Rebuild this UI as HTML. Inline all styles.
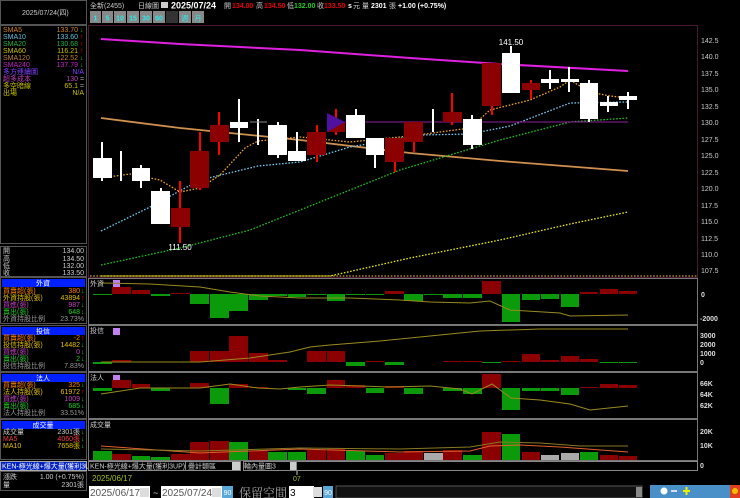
<!DOCTYPE html>
<html><head><meta charset="utf-8"><style>
html,body{margin:0;padding:0;background:#000;width:740px;height:498px;overflow:hidden}
svg{display:block}
text{font-family:"Liberation Sans","Noto Sans CJK TC",sans-serif;font-size:7px}
.d{stroke-dasharray:1.6 1.6;fill:none;stroke-width:1.3}
.w{fill:#fff}.rb{fill:#8b0000}.rw{stroke:#f00;stroke-width:2}.ww{stroke:#fff;stroke-width:2}
.g{fill:#0a9a0a}.r{fill:#8b0000}.gy{fill:#aaa}
</style></head><body>
<svg width="740" height="498" viewBox="0 0 740 498" xmlns="http://www.w3.org/2000/svg">
<rect width="740" height="498" fill="#000"/>
<g fill="none" stroke="#555" stroke-width="1">
<rect x="0.5" y="0.5" width="86" height="24"/>
<rect x="0.5" y="25.5" width="86" height="218"/>
<rect x="0.5" y="246.5" width="86" height="30"/>
<rect x="0.5" y="277.5" width="86" height="46"/>
<rect x="0.5" y="325.5" width="86" height="46"/>
<rect x="0.5" y="372.5" width="86" height="46"/>
<rect x="0.5" y="419.5" width="86" height="40"/>
<rect x="0.5" y="471.5" width="86" height="19"/>
</g>
<text x="22" y="15" fill="#ccc">2025/07/24(四)</text>
<g>
<text x="3" y="32" fill="#d08020">SMA5</text><text x="78" y="32" fill="#d08020" text-anchor="end">133.70</text><text x="80" y="32" fill="#0c0">↓</text>
<text x="3" y="39" fill="#60c0e0">SMA10</text><text x="78" y="39" fill="#60c0e0" text-anchor="end">133.60</text><text x="80" y="39" fill="#f00">↑</text>
<text x="3" y="46" fill="#20b040">SMA20</text><text x="78" y="46" fill="#20b040" text-anchor="end">130.68</text><text x="80" y="46" fill="#f00">↑</text>
<text x="3" y="53" fill="#c8c000">SMA60</text><text x="78" y="53" fill="#c8c000" text-anchor="end">116.21</text><text x="80" y="53" fill="#f00">↑</text>
<text x="3" y="60" fill="#c08040">SMA120</text><text x="78" y="60" fill="#c08040" text-anchor="end">122.52</text><text x="80" y="60" fill="#0c0">↓</text>
<text x="3" y="67" fill="#c020c0">SMA240</text><text x="78" y="67" fill="#c020c0" text-anchor="end">137.79</text><text x="80" y="67" fill="#0c0">↓</text>
<text x="3" y="74" fill="#8040ff">多方連續圖</text><text x="84" y="74" fill="#8040ff" text-anchor="end">N/A</text>
<text x="3" y="81" fill="#c040c0">超多成本</text><text x="78" y="81" fill="#c040c0" text-anchor="end">130</text><text x="80" y="81" fill="#aaa">=</text>
<text x="3" y="88" fill="#c8c000">多空暗線</text><text x="78" y="88" fill="#c8c000" text-anchor="end">65.1</text><text x="80" y="88" fill="#aaa">=</text>
<text x="3" y="95" fill="#c8c000">出場</text><text x="84" y="95" fill="#c8c000" text-anchor="end">N/A</text>
</g>
<g fill="#ccc">
<text x="3" y="253">開</text><text x="84" y="253" text-anchor="end">134.00</text>
<text x="3" y="261">高</text><text x="84" y="261" text-anchor="end">134.50</text>
<text x="3" y="268">低</text><text x="84" y="268" text-anchor="end">132.00</text>
<text x="3" y="275">收</text><text x="84" y="275" text-anchor="end">133.50</text>
</g>
<rect x="2" y="279" width="83" height="8" fill="#0020ff"/><text x="43" y="285.5" fill="#fff" text-anchor="middle">外資</text>
<rect x="2" y="327" width="83" height="8" fill="#0020ff"/><text x="43" y="333.5" fill="#fff" text-anchor="middle">投信</text>
<rect x="2" y="374" width="83" height="8" fill="#0020ff"/><text x="43" y="380.5" fill="#fff" text-anchor="middle">法人</text>
<rect x="2" y="421" width="83" height="8" fill="#0020ff"/><text x="43" y="427.5" fill="#fff" text-anchor="middle">成交量</text>
<g>
<text x="3" y="293" fill="#ff8000">買賣超(張)</text><text x="80" y="293" fill="#ff8000" text-anchor="end">380</text><text x="81" y="293" fill="#0c0">↓</text>
<text x="3" y="300" fill="#e0c000">外資持股(張)</text><text x="80" y="300" fill="#e0c000" text-anchor="end">43894</text><text x="81" y="300" fill="#f00">↑</text>
<text x="3" y="307" fill="#c040c0">買進(張)</text><text x="80" y="307" fill="#c040c0" text-anchor="end">987</text><text x="81" y="307" fill="#0c0">↓</text>
<text x="3" y="314" fill="#2c2">賣出(張)</text><text x="80" y="314" fill="#2c2" text-anchor="end">648</text><text x="81" y="314" fill="#0c0">↓</text>
<text x="3" y="321" fill="#999">外資持股比例</text><text x="84" y="321" fill="#999" text-anchor="end">23.73%</text>
<text x="3" y="340" fill="#ff8000">買賣超(張)</text><text x="80" y="340" fill="#ff8000" text-anchor="end">-2</text><text x="81" y="340" fill="#f00">↑</text>
<text x="3" y="347" fill="#e0c000">投信持股(張)</text><text x="80" y="347" fill="#e0c000" text-anchor="end">14482</text><text x="81" y="347" fill="#0c0">↓</text>
<text x="3" y="354" fill="#c040c0">買進(張)</text><text x="80" y="354" fill="#c040c0" text-anchor="end">0</text><text x="81" y="354" fill="#0c0">↓</text>
<text x="3" y="361" fill="#2c2">賣出(張)</text><text x="80" y="361" fill="#2c2" text-anchor="end">2</text><text x="81" y="361" fill="#0c0">↓</text>
<text x="3" y="368" fill="#999">投信持股比例</text><text x="84" y="368" fill="#999" text-anchor="end">7.83%</text>
<text x="3" y="387" fill="#ff8000">買賣超(張)</text><text x="80" y="387" fill="#ff8000" text-anchor="end">325</text><text x="81" y="387" fill="#0c0">↓</text>
<text x="3" y="394" fill="#e0c000">法人持股(張)</text><text x="80" y="394" fill="#e0c000" text-anchor="end">61972</text><text x="81" y="394" fill="#f00">↑</text>
<text x="3" y="401" fill="#c040c0">買進(張)</text><text x="80" y="401" fill="#c040c0" text-anchor="end">1009</text><text x="81" y="401" fill="#0c0">↓</text>
<text x="3" y="408" fill="#2c2">賣出(張)</text><text x="80" y="408" fill="#2c2" text-anchor="end">685</text><text x="81" y="408" fill="#0c0">↓</text>
<text x="3" y="415" fill="#999">法人持股比例</text><text x="84" y="415" fill="#999" text-anchor="end">33.51%</text>
<text x="3" y="434" fill="#ccc">成交量</text><text x="80" y="434" fill="#ccc" text-anchor="end">2301張</text><text x="81" y="434" fill="#0c0">↓</text>
<text x="3" y="441" fill="#f04040">MA5</text><text x="80" y="441" fill="#f04040" text-anchor="end">4060張</text><text x="81" y="441" fill="#0c0">↓</text>
<text x="3" y="448" fill="#e0c000">MA10</text><text x="80" y="448" fill="#e0c000" text-anchor="end">7658張</text><text x="81" y="448" fill="#0c0">↓</text>
</g>
<rect x="0.5" y="461.5" width="86" height="9" fill="#0020c0" stroke="#aaa"/>
<text x="2" y="468.5" fill="#fff">KEN-極光線+爆大量(獲利3UP)</text>
<text x="3" y="479" fill="#ccc">漲跌</text><text x="84" y="479" fill="#ccc" text-anchor="end">1.00 (+0.75%)</text>
<text x="3" y="487" fill="#ccc">量</text><text x="84" y="487" fill="#ccc" text-anchor="end">2301張</text>

<text x="90" y="8" fill="#ccc">全新(2455)</text>
<text x="138" y="8" fill="#ccc">日線圖</text>
<rect x="161" y="2" width="7" height="6" fill="#ccc"/>
<text x="171" y="8.5" fill="#fff" style="font-size:9px;font-weight:bold">2025/07/24</text>
<text x="224" y="8" fill="#ccc">開</text><text x="232" y="8" fill="#e00" style="font-weight:bold">134.00</text>
<text x="256" y="8" fill="#ccc">高</text><text x="264" y="8" fill="#e00" style="font-weight:bold">134.50</text>
<text x="287" y="8" fill="#ccc">低</text><text x="294" y="8" fill="#2c2" style="font-weight:bold">132.00</text>
<text x="317" y="8" fill="#ccc">收</text><text x="324" y="8" fill="#e00" style="font-weight:bold">133.50</text>
<text x="348" y="8" fill="#fff" style="font-weight:bold">s</text><text x="353" y="8" fill="#ccc">元</text>
<text x="362" y="8" fill="#ccc">量</text><text x="371" y="8" fill="#fff" style="font-weight:bold">2301</text><text x="389" y="8" fill="#ccc">張</text>
<text x="398" y="8" fill="#fff" style="font-weight:bold">+1.00 (+0.75%)</text>
<g fill="#888">
<rect x="90" y="11" width="11" height="12"/><rect x="102" y="11" width="11" height="12"/><rect x="114" y="11" width="12" height="12"/>
<rect x="127" y="11" width="12" height="12"/><rect x="140" y="11" width="12" height="12"/><rect x="153" y="11" width="12" height="12"/>
<rect x="179" y="11" width="12" height="12"/><rect x="192" y="11" width="12" height="12"/>
</g>
<rect x="166" y="11" width="12" height="12" fill="#333"/>
<g fill="#30e8e8" style="font-size:8px;font-weight:bold" text-anchor="middle">
<text x="95.5" y="20.5">1</text><text x="107.5" y="20.5">5</text><text x="120" y="20.5">10</text><text x="133" y="20.5">15</text><text x="146" y="20.5">30</text><text x="159" y="20.5">60</text><text x="185" y="20.5" style="font-weight:normal">週</text><text x="198" y="20.5" style="font-weight:normal">月</text>
</g>

<rect x="88.5" y="25.5" width="609" height="252" fill="none" stroke="#4a1830"/>
<g fill="#ccc" style="font-size:7px">
<text x="701" y="43">142.5</text><text x="701" y="59">140.0</text><text x="701" y="76">137.5</text><text x="701" y="92">135.0</text><text x="701" y="109">132.5</text><text x="701" y="125">130.0</text><text x="701" y="142">127.5</text><text x="701" y="158">125.0</text><text x="701" y="175">122.5</text><text x="701" y="191">120.0</text><text x="701" y="208">117.5</text><text x="701" y="224">115.0</text><text x="701" y="241">112.5</text><text x="701" y="257">110.0</text><text x="701" y="273">107.5</text>
</g>
<line x1="90" y1="276" x2="697" y2="276" stroke="#c8a030" class="d"/>
<polyline points="101,39 180,44 300,50 410,58 500,64 628,71" fill="none" stroke="#e020e0" stroke-width="2"/>
<polyline points="101,118 180,128 300,140 410,153 500,161 628,171" fill="none" stroke="#d09050" stroke-width="1.8"/>
<polyline class="d" stroke="#e8e820" points="101,276 330,276 410,258 500,240 570,224 628,212"/>
<polyline class="d" stroke="#20c020" points="101,265 180,248 250,230 300,210 400,170 450,155 500,140 570,122 628,118"/>
<polyline class="d" stroke="#70c8f0" points="101,231 150,207 200,180 258,166 300,162 350,147 420,135 470,134 510,126 570,103 628,102"/>
<polyline class="d" stroke="#f0a030" points="101,178 130,174 160,180 180,192 200,188 220,175 245,148 258,141 300,137 350,142 410,136 470,128 490,110 530,100 560,87 570,80 590,92 610,96 628,98"/>
<line x1="345" y1="122" x2="628" y2="122" stroke="#9020a0" stroke-width="1"/>
<g>
<line class="ww" x1="102" y1="142" x2="102" y2="181"/><rect class="w" x="93" y="158" width="19" height="20"/>
<line class="ww" x1="121" y1="151" x2="121" y2="181"/>
<line class="ww" x1="141" y1="165" x2="141" y2="188"/><rect class="w" x="132" y="168" width="18" height="13"/>
<line class="ww" x1="161" y1="188" x2="161" y2="224"/><rect class="w" x="151" y="191" width="19" height="33"/>
<line class="rw" x1="180" y1="181" x2="180" y2="243"/><rect class="rb" x="171" y="208" width="19" height="19"/>
<line class="rw" x1="200" y1="132" x2="200" y2="190"/><rect class="rb" x="190" y="151" width="19" height="37"/>
<line class="rw" x1="219" y1="112" x2="219" y2="155"/><rect class="rb" x="210" y="125" width="19" height="17"/>
<line class="ww" x1="239" y1="99" x2="239" y2="142"/><rect class="w" x="230" y="122" width="18" height="6"/>
<line class="ww" x1="258" y1="119" x2="258" y2="145"/><line x1="250" y1="122" x2="267" y2="122" stroke="#888"/>
<line class="ww" x1="278" y1="122" x2="278" y2="158"/><rect class="w" x="268" y="125" width="19" height="30"/>
<line class="ww" x1="297" y1="132" x2="297" y2="161"/><rect class="w" x="288" y="151" width="18" height="10"/>
<line class="rw" x1="317" y1="125" x2="317" y2="162"/><rect class="rb" x="307" y="132" width="19" height="23"/>
<line class="rw" x1="336" y1="109" x2="336" y2="135"/><rect class="rb" x="327" y="122" width="18" height="10"/>
<polygon points="327,113 345,122 327,132" fill="#5010a0"/>
<line class="ww" x1="356" y1="109" x2="356" y2="138"/><rect class="w" x="346" y="115" width="19" height="23"/>
<line class="ww" x1="375" y1="138" x2="375" y2="168"/><rect class="w" x="366" y="138" width="18" height="17"/>
<line class="rw" x1="395" y1="138" x2="395" y2="172"/><rect class="rb" x="385" y="138" width="19" height="24"/>
<line class="rw" x1="414" y1="122" x2="414" y2="152"/><rect class="rb" x="404" y="122" width="19" height="20"/>
<line class="ww" x1="433" y1="109" x2="433" y2="132"/>
<line class="rw" x1="452" y1="93" x2="452" y2="125"/><rect class="rb" x="443" y="112" width="19" height="10"/>
<line class="ww" x1="472" y1="115" x2="472" y2="149"/><rect class="w" x="463" y="119" width="19" height="26"/>
<line class="rw" x1="492" y1="63" x2="492" y2="115"/><rect class="rb" x="482" y="63" width="19" height="43"/>
<line class="ww" x1="511" y1="46" x2="511" y2="93"/><rect class="w" x="502" y="53" width="18" height="40"/>
<line class="rw" x1="531" y1="80" x2="531" y2="99"/><rect class="rb" x="522" y="83" width="18" height="7"/>
<line class="ww" x1="550" y1="70" x2="550" y2="89"/><rect class="w" x="541" y="79" width="18" height="4"/>
<line class="ww" x1="569" y1="67" x2="569" y2="92"/><rect class="w" x="561" y="79" width="18" height="3"/>
<line class="ww" x1="589" y1="80" x2="589" y2="122"/><rect class="w" x="580" y="83" width="18" height="36"/>
<line class="ww" x1="608" y1="96" x2="608" y2="112"/><rect class="w" x="600" y="102" width="18" height="4"/>
<line class="ww" x1="628" y1="92" x2="628" y2="109"/><rect class="w" x="619" y="96" width="18" height="4"/>
</g>
<text x="511" y="45" fill="#fff" text-anchor="middle" style="font-size:8px">141.50</text>
<text x="180" y="250" fill="#fff" text-anchor="middle" style="font-size:8px">111.50</text>

<g fill="none" stroke="#777">
<rect x="88.5" y="278.5" width="609" height="46"/>
<rect x="88.5" y="325.5" width="609" height="46"/>
<rect x="88.5" y="372.5" width="609" height="46"/>
<rect x="88.5" y="419.5" width="609" height="41"/>
</g>
<g fill="#ccc">
<text x="90" y="286">外資</text><text x="90" y="333">投信</text><text x="90" y="380">法人</text><text x="90" y="427">成交量</text>
</g>
<rect x="113" y="280" width="7" height="7" fill="#c080f0"/><rect x="113" y="328" width="7" height="7" fill="#c080f0"/><rect x="113" y="375" width="7" height="7" fill="#c080f0"/>
<g fill="#ddd" style="font-size:7px;font-weight:bold">
<text x="701" y="297">0</text><text x="700" y="321">-2000</text>
<text x="700" y="338">3000</text><text x="700" y="347">2000</text><text x="700" y="356">1000</text><text x="700" y="365">0</text>
<text x="700" y="386">66K</text><text x="700" y="397">64K</text><text x="700" y="408">62K</text>
<text x="700" y="434">20K</text><text x="700" y="448">10K</text><text x="700" y="468">0</text>
</g>
<g>
<rect class="g" x="93" y="294" width="19" height="1"/>
<rect class="r" x="112" y="287" width="19" height="7"/>
<rect class="r" x="132" y="290" width="18" height="4"/>
<rect class="g" x="151" y="294" width="19" height="2"/>
<rect class="r" x="171" y="293" width="19" height="1"/>
<rect class="g" x="190" y="294" width="19" height="10"/>
<rect class="g" x="210" y="294" width="19" height="24"/>
<rect class="g" x="229" y="294" width="19" height="17"/>
<rect class="g" x="249" y="294" width="19" height="6"/>
<rect class="g" x="268" y="294" width="19" height="2"/>
<rect class="g" x="288" y="294" width="18" height="3"/>
<rect class="g" x="307" y="294" width="19" height="1"/>
<rect class="g" x="327" y="294" width="18" height="7"/>
<rect class="g" x="346" y="294" width="19" height="1"/>
<rect class="g" x="366" y="294" width="18" height="1"/>
<rect class="r" x="385" y="291" width="19" height="3"/>
<rect class="g" x="404" y="294" width="19" height="7"/>
<rect class="g" x="424" y="294" width="19" height="1"/>
<rect class="g" x="443" y="294" width="19" height="4"/>
<rect class="g" x="463" y="294" width="19" height="4"/>
<rect class="r" x="482" y="281" width="19" height="13"/>
<rect class="g" x="502" y="294" width="18" height="28"/>
<rect class="g" x="522" y="294" width="18" height="6"/>
<rect class="g" x="541" y="294" width="18" height="5"/>
<rect class="g" x="561" y="294" width="18" height="13"/>
<rect class="r" x="580" y="292" width="18" height="2"/>
<rect class="r" x="600" y="289" width="18" height="5"/>
<rect class="r" x="619" y="291" width="18" height="3"/>
</g>
<polyline points="101,283 150,284 200,287 230,292 260,296 300,298 350,298 400,300 430,302 470,303 490,301 510,310 560,313 570,316 628,315" fill="none" stroke="#9a8a20" stroke-width="1"/>
<g>
<rect class="g" x="93" y="362" width="19" height="2"/>
<rect class="r" x="112" y="360" width="19" height="2"/>
<rect class="r" x="190" y="351" width="19" height="11"/>
<rect class="r" x="210" y="351" width="19" height="11"/>
<rect class="r" x="229" y="336" width="19" height="26"/>
<rect class="r" x="249" y="353" width="19" height="9"/>
<rect class="r" x="268" y="360" width="19" height="2"/>
<rect class="r" x="307" y="351" width="19" height="11"/>
<rect class="r" x="327" y="351" width="18" height="11"/>
<rect class="g" x="346" y="362" width="19" height="4"/>
<rect class="r" x="366" y="361" width="18" height="1"/>
<rect class="g" x="385" y="362" width="19" height="3"/>
<rect class="r" x="443" y="361" width="19" height="1"/>
<rect class="r" x="463" y="361" width="19" height="1"/>
<rect class="g" x="482" y="362" width="19" height="1"/>
<rect class="r" x="502" y="361" width="18" height="1"/>
<rect class="r" x="522" y="354" width="18" height="8"/>
<rect class="r" x="541" y="360" width="18" height="2"/>
<rect class="r" x="561" y="356" width="18" height="6"/>
<rect class="r" x="580" y="359" width="18" height="3"/>
<rect class="g" x="600" y="362" width="18" height="1"/>
<rect class="g" x="619" y="362" width="18" height="1"/>
</g>
<polyline points="101,362 200,362 250,358 290,352 310,347 330,345 380,341 420,337 480,331 540,329 580,329 628,329" fill="none" stroke="#9a8a20" stroke-width="1"/>
<g>
<rect class="g" x="93" y="388" width="19" height="3"/>
<rect class="r" x="112" y="380" width="19" height="8"/>
<rect class="r" x="132" y="384" width="18" height="4"/>
<rect class="g" x="151" y="388" width="19" height="3"/>
<rect class="r" x="190" y="383" width="19" height="5"/>
<rect class="g" x="210" y="388" width="19" height="16"/>
<rect class="r" x="229" y="384" width="19" height="4"/>
<rect class="r" x="249" y="387" width="19" height="1"/>
<rect class="g" x="288" y="388" width="18" height="2"/>
<rect class="g" x="307" y="388" width="19" height="6"/>
<rect class="r" x="327" y="380" width="18" height="8"/>
<rect class="r" x="346" y="385" width="19" height="3"/>
<rect class="g" x="366" y="388" width="18" height="5"/>
<rect class="r" x="385" y="386" width="19" height="2"/>
<rect class="g" x="404" y="388" width="19" height="6"/>
<rect class="g" x="443" y="388" width="19" height="3"/>
<rect class="g" x="463" y="388" width="19" height="6"/>
<rect class="r" x="482" y="374" width="19" height="14"/>
<rect class="g" x="502" y="388" width="18" height="22"/>
<rect class="g" x="522" y="388" width="18" height="3"/>
<rect class="g" x="541" y="388" width="18" height="3"/>
<rect class="g" x="561" y="388" width="18" height="7"/>
<rect class="r" x="580" y="387" width="18" height="1"/>
<rect class="r" x="600" y="384" width="18" height="4"/>
<rect class="r" x="619" y="385" width="18" height="3"/>
</g>
<polyline points="101,394 140,388 200,388 230,384 258,388 280,389 300,387 330,385 360,386 390,387 430,386 460,389 472,394 492,384 511,398 540,400 570,404 590,410 628,406" fill="none" stroke="#9a8a20" stroke-width="1"/>
<g>
<rect class="g" x="93" y="451" width="19" height="9"/>
<rect class="r" x="112" y="454" width="19" height="6"/>
<rect class="g" x="132" y="456" width="18" height="4"/>
<rect class="g" x="151" y="457" width="19" height="3"/>
<rect class="r" x="171" y="454" width="19" height="6"/>
<rect class="r" x="190" y="442" width="19" height="18"/>
<rect class="r" x="210" y="441" width="19" height="19"/>
<rect class="g" x="229" y="442" width="19" height="18"/>
<rect class="r" x="249" y="451" width="19" height="9"/>
<rect class="g" x="268" y="452" width="19" height="8"/>
<rect class="g" x="288" y="452" width="18" height="8"/>
<rect class="r" x="307" y="450" width="19" height="10"/>
<rect class="r" x="327" y="449" width="18" height="11"/>
<rect class="g" x="346" y="451" width="19" height="9"/>
<rect class="g" x="366" y="455" width="18" height="5"/>
<rect class="r" x="385" y="453" width="19" height="7"/>
<rect class="r" x="404" y="451" width="19" height="9"/>
<rect class="gy" x="424" y="453" width="19" height="7"/>
<rect class="r" x="443" y="450" width="19" height="10"/>
<rect class="g" x="463" y="455" width="19" height="5"/>
<rect class="r" x="482" y="432" width="19" height="28"/>
<rect class="g" x="502" y="434" width="18" height="26"/>
<rect class="r" x="522" y="452" width="18" height="8"/>
<rect class="gy" x="541" y="455" width="18" height="5"/>
<rect class="gy" x="561" y="453" width="18" height="7"/>
<rect class="g" x="580" y="452" width="18" height="8"/>
<rect class="r" x="600" y="455" width="18" height="5"/>
<rect class="r" x="619" y="456" width="18" height="4"/>
</g>
<polyline points="101,446 200,453 300,449 400,452 470,451 490,446 520,445 560,447 628,452" fill="none" stroke="#e06030" stroke-width="1"/>
<polyline points="101,449 200,451 300,448 400,449 470,447 500,442 540,443 580,446 628,446" fill="none" stroke="#8a7a20" stroke-width="1"/>

<rect x="88.5" y="461.5" width="97" height="9" fill="#000" stroke="#888"/>
<text x="90" y="468.5" fill="#ccc">KEN-極光線+爆大量(獲利3UP)</text>
<rect x="185.5" y="461.5" width="55" height="9" fill="#000" stroke="#888"/>
<text x="188" y="468.5" fill="#ccc">疊計類區</text>
<rect x="232" y="462" width="8" height="8" fill="#ccc"/>
<rect x="243.5" y="461.5" width="53" height="9" fill="#000" stroke="#888"/>
<text x="244" y="468.5" fill="#ccc">輪內量圖3</text>
<rect x="290" y="462" width="6" height="8" fill="#ccc"/>
<rect x="296.5" y="461.5" width="401" height="9" fill="#000" stroke="#888"/>
<line x1="297" y1="471" x2="297" y2="475" stroke="#ccc"/>
<text x="92" y="481" fill="#a0c020" style="font-size:8px">2025/06/17</text>
<text x="293" y="481" fill="#a0c020" style="font-size:7px">07</text>
<rect x="89" y="486" width="61" height="12" fill="#fff"/>
<text x="90" y="496" fill="#555" style="font-size:10px">2025/06/17</text>
<rect x="140" y="488" width="9" height="9" fill="#ddd"/>
<text x="153" y="496" fill="#ccc" style="font-size:9px">~</text>
<rect x="161" y="486" width="61" height="12" fill="#fff"/>
<text x="162" y="496" fill="#555" style="font-size:10px">2025/07/24</text>
<rect x="212" y="488" width="9" height="9" fill="#ddd"/>
<rect x="222" y="486" width="11" height="12" fill="#5aa8d8"/><text x="227.5" y="495" fill="#fff" text-anchor="middle" style="font-size:7px">90</text>
<text x="239" y="497" fill="#aaa" style="font-size:12px;font-family:'Noto Serif CJK SC',serif">保留空間</text>
<rect x="289" y="486" width="25" height="12" fill="#fff"/><text x="290" y="496" fill="#000" style="font-size:10px">3</text>
<rect x="313" y="487" width="9" height="10" fill="#ddd"/>
<rect x="323" y="486" width="10" height="12" fill="#5aa8d8"/><text x="328" y="495" fill="#fff" text-anchor="middle" style="font-size:7px">90</text>
<rect x="336" y="486" width="306" height="12" fill="#111" stroke="#555"/>
<rect x="636" y="487" width="6" height="10" fill="#888"/>
<rect x="650" y="485" width="90" height="13" fill="#4a90c8"/>
<g fill="#fff"><circle cx="664" cy="491" r="3.5"/><rect x="671" y="490" width="6" height="2" fill="#dde"/><rect x="683" y="490" width="7" height="2" fill="#ee0"/><rect x="685.5" y="487" width="2" height="8" fill="#ee0"/></g>
<rect x="730" y="485" width="10" height="13" fill="#e04020"/><circle cx="735" cy="491" r="3" fill="#f0c000"/>
</svg>
</body></html>
